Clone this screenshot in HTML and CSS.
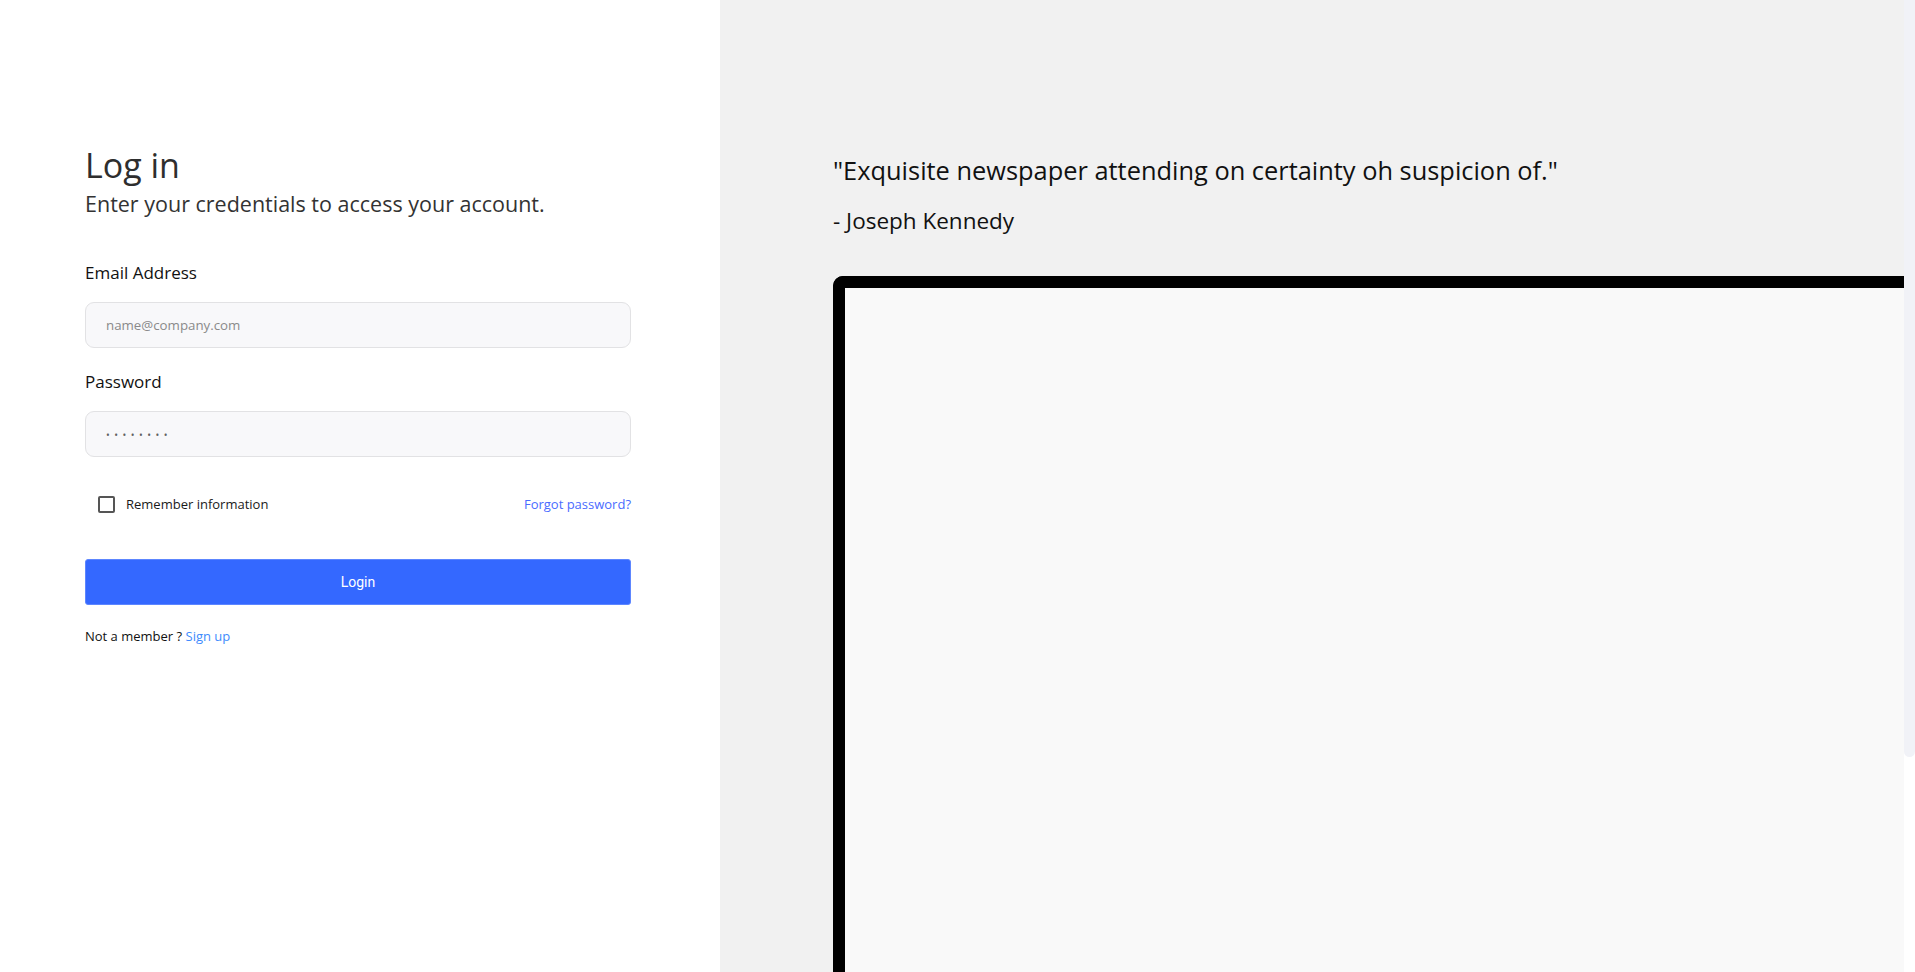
FILE: index.html
```html
<!DOCTYPE html>
<html lang="en">
<head>
<meta charset="utf-8">
<title>Log in</title>
<link rel="stylesheet" href="styles.css">
</head>
<body>
<div class="page">
  <section class="left">
    <h1 class="title">Log in</h1>
    <p class="subtitle">Enter your credentials to access your account.</p>
    <form class="form">
      <label class="label" for="email">Email Address</label>
      <input class="input" id="email" type="email" placeholder="name@company.com">
      <label class="label label-pw" for="pw">Password</label>
      <input class="input input-pw" id="pw" type="password" placeholder="••••••••">
      <div class="row">
        <label class="check">
          <span class="box"></span>
          <span class="check-text">Remember information</span>
        </label>
        <a class="forgot" href="#">Forgot password?</a>
      </div>
      <button class="btn" type="button">Login</button>
      <p class="signup">Not a member ? <a class="signup-link" href="#">Sign up</a></p>
    </form>
  </section>
  <section class="right">
    <p class="quote">"Exquisite newspaper attending on certainty oh suspicion of."</p>
    <p class="author">- Joseph Kennedy</p>
    <div class="frame"><div class="screen"></div></div>
  </section>
</div>
<div class="scroll-thumb"></div>
</body>
</html>
```
FILE: styles.css
```css
html, body {
  margin: 0;
  padding: 0;
  background: #ffffff;
}
body {
  font-family: "Open Sans", "Liberation Sans", sans-serif;
  color: #222;
  padding-right: 11px;
  overflow-x: hidden;
}
.page {
  display: flex;
  min-height: 100vh;
}
.left {
  width: 720px;
  flex: none;
  box-sizing: border-box;
  padding: 145px 89px 0 85px;
  background: #fff;
}
.title {
  margin: 0;
  font-size: 34px;
  line-height: 40px;
  font-weight: 400;
  color: #2e2e2e;
}
.subtitle {
  margin: 5px 0 0;
  font-size: 21.5px;
  line-height: 28px;
  color: #333;
}
.form {
  display: flex;
  flex-direction: column;
  margin-top: 44px;
}
.label {
  font-size: 17px;
  line-height: 22px;
  color: #111;
  font-weight: 500;
}
.label-pw {
  margin-top: 23px;
}
.input {
  margin-top: 18px;
  height: 46px;
  box-sizing: border-box;
  border: 1px solid #e2e2e4;
  border-radius: 9px;
  background: #f8f8fa;
  padding: 0 20px;
  font-family: "Open Sans", sans-serif;
  font-size: 13.3px;
  color: #333;
  outline: none;
}
.label-pw + .input {
  margin-top: 18px;
}
.input::placeholder {
  color: #8a8a8a;
}
.input-pw::placeholder {
  font-size: 10px;
  letter-spacing: 4.5px;
  color: #5f5f5f;
}
.row {
  display: flex;
  justify-content: space-between;
  align-items: center;
  margin-top: 38px;
  padding-left: 13px;
}
.check {
  display: flex;
  align-items: center;
  gap: 11px;
}
.box {
  width: 17px;
  height: 17px;
  box-sizing: border-box;
  border: 2px solid #555;
  border-radius: 2px;
  background: #fff;
}
.check-text {
  font-size: 13px;
  color: #1a1a1a;
}
.forgot {
  font-size: 13px;
  color: #4a6bff;
  text-decoration: none;
}
.btn {
  margin-top: 46px;
  height: 46px;
  border: 1px solid #5d86ff;
  border-radius: 3px;
  background: #3468ff;
  color: #fff;
  font-family: Roboto, "Liberation Sans", sans-serif;
  font-size: 14px;
}
.signup {
  margin: 22px 0 0;
  font-size: 13px;
  color: #111;
}
.signup-link {
  color: #3d8bfd;
  text-decoration: none;
}
.right {
  flex: 1;
  min-width: 0;
  background: #f1f1f1;
  padding: 153px 0 0 113px;
  overflow: hidden;
}
.quote {
  margin: 0;
  font-size: 25.4px;
  line-height: 34px;
  color: #111;
}
.author {
  margin: 20px 0 0;
  font-size: 22.5px;
  line-height: 28px;
  color: #111;
}
.frame {
  margin-top: 41px;
  width: 1200px;
  height: 970px;
  box-sizing: border-box;
  border: 12px solid #000;
  border-bottom: 0;
  border-radius: 10px 10px 0 0;
  background: #000;
}
.screen {
  height: 100%;
  background: #f9f9f9;
}
.scroll-thumb {
  position: fixed;
  top: 0;
  right: 0;
  width: 11px;
  height: 757px;
  background: #f1f2f7;
  border-radius: 0 0 6px 6px;
}
```
